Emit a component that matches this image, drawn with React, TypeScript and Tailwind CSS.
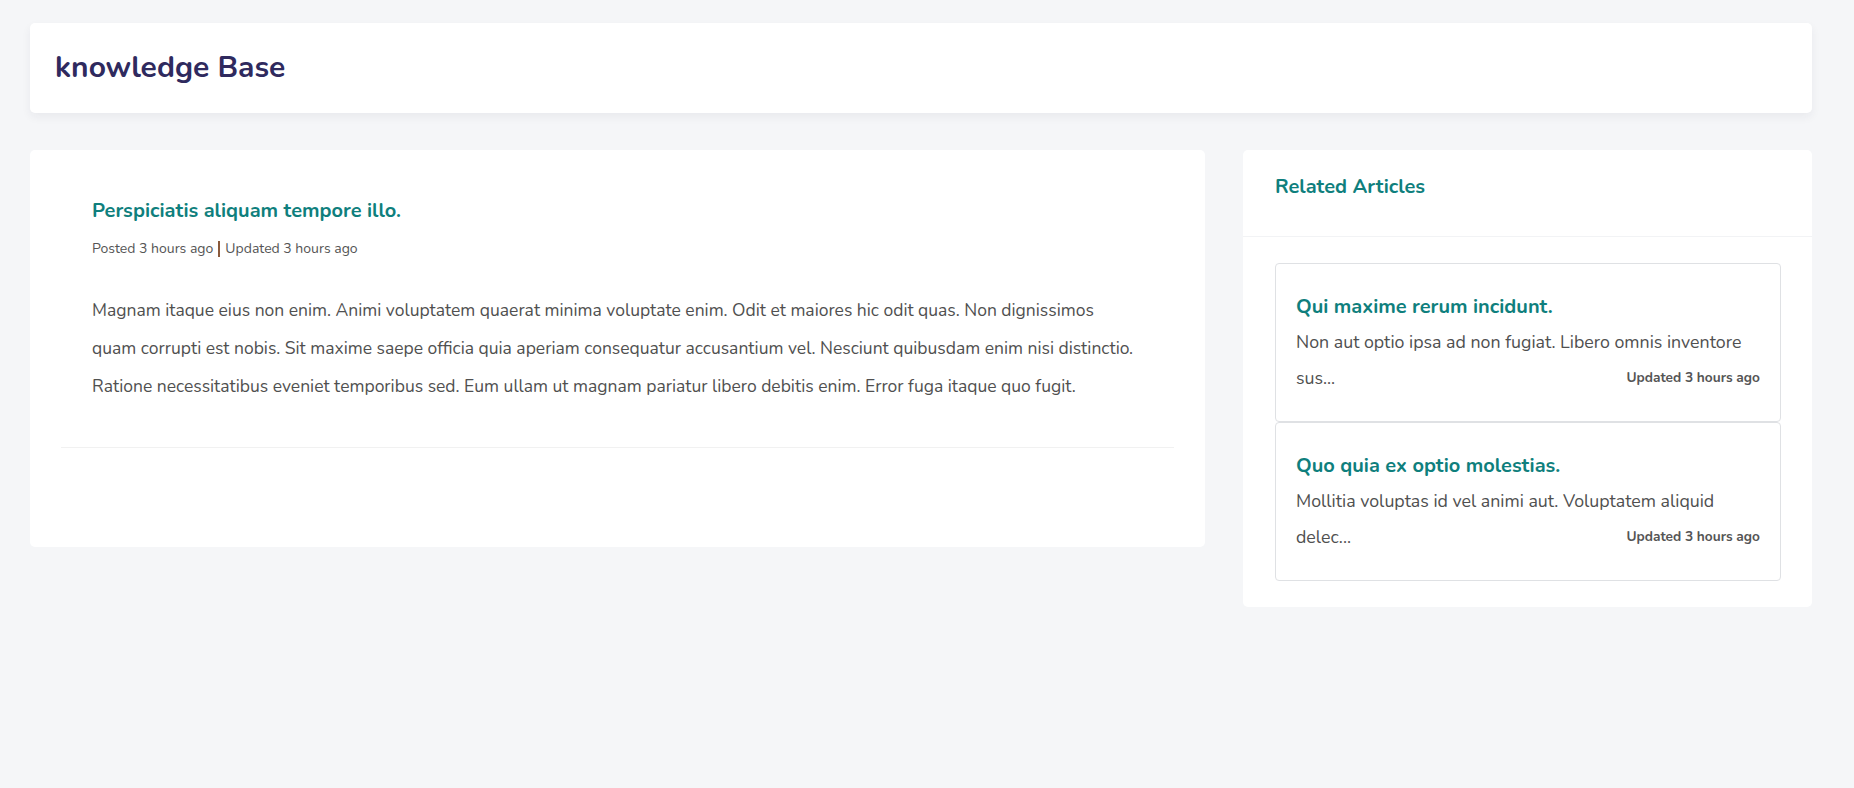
import React from "react";

const font = { fontFamily: "Nunito, Lato, 'Noto Sans', sans-serif" };

function RelatedCard({ title, desc1, desc2 }: { title: string; desc1: string; desc2: string }) {
  return (
    <div className="border border-[#dfe1e4] rounded-[4px] bg-white px-[20px] pt-[30px] pb-[25px]">
      <div className="text-[20px] font-bold text-[#0f7f7d] leading-[26px]">{title}</div>
      <div className="mt-[4px] text-[17.8px] text-[#505050] leading-[36px]">{desc1}</div>
      <div className="flex items-center justify-between text-[17.8px] text-[#505050] leading-[36px]">
        <span>{desc2}</span>
        <span className="text-[13.7px] font-bold text-[#555]">Updated 3 hours ago</span>
      </div>
    </div>
  );
}

export default function App() {
  return (
    <div className="min-h-[788px] bg-[#f5f6f8] pl-[30px] pr-[42px] pt-[23px]" style={font}>
      <div className="bg-white rounded-[5px] shadow-[0_4px_10px_rgba(30,40,70,0.06)] h-[90px] flex items-center px-[25px]">
        <h1 className="text-[30px] font-bold text-[#2f2a5e] leading-none">knowledge Base</h1>
      </div>
      <div className="mt-[37px] flex items-start gap-[38px]">
        <div className="flex-1 bg-white rounded-[5px] px-[31px] pt-[47px] h-[397px]">
          <div className="px-[31px]">
            <h2 className="text-[20px] font-bold text-[#0f7f7d] leading-[28px]">Perspiciatis aliquam tempore illo.</h2>
            <div className="mt-[13px] text-[14px] text-[#555] flex items-center">
              <span>Posted 3 hours ago</span>
              <span className="mx-[5px] w-[2px] h-[16px] bg-[#8a5a3c]"></span>
              <span>Updated 3 hours ago</span>
            </div>
            <p className="mt-[32px] text-[17.5px] leading-[38px] text-[#505050]">
              <span className="block">Magnam itaque eius non enim. Animi voluptatem quaerat minima voluptate enim. Odit et maiores hic odit quas. Non dignissimos</span>
              <span className="block">quam corrupti est nobis. Sit maxime saepe officia quia aperiam consequatur accusantium vel. Nesciunt quibusdam enim nisi distinctio.</span>
              <span className="block">Ratione necessitatibus eveniet temporibus sed. Eum ullam ut magnam pariatur libero debitis enim. Error fuga itaque quo fugit.</span>
            </p>
          </div>
          <div className="mt-[42px] border-t border-[#f1f1f1]"></div>
        </div>
        <div className="w-[569px] bg-white rounded-[5px]">
          <div className="h-[87px] border-b border-[#f2f3f5] px-[32px] pt-[23px]">
            <h3 className="text-[20px] font-bold text-[#0f7f7d] leading-[27px]">Related Articles</h3>
          </div>
          <div className="px-[32px] pr-[31px] pt-[26px] pb-[26px] flex flex-col">
            <RelatedCard
              title="Qui maxime rerum incidunt."
              desc1="Non aut optio ipsa ad non fugiat. Libero omnis inventore"
              desc2="sus..."
            />
            <RelatedCard
              title="Quo quia ex optio molestias."
              desc1="Mollitia voluptas id vel animi aut. Voluptatem aliquid"
              desc2="delec..."
            />
          </div>
        </div>
      </div>
    </div>
  );
}
